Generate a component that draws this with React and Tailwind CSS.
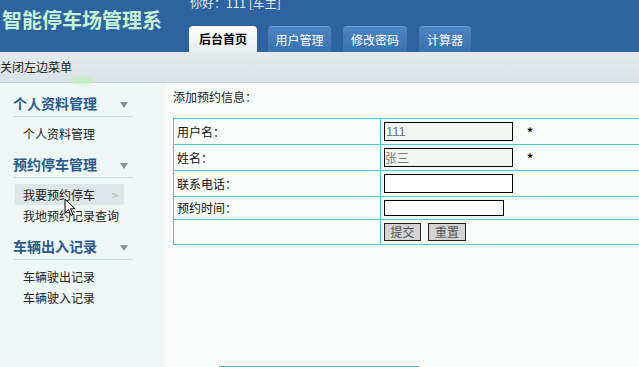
import React from "react";

const F = { fontFamily: '"Noto Sans CJK SC", "Noto Sans", sans-serif' };
const S = { fontFamily: '"Liberation Sans", "Noto Sans CJK SC", sans-serif' };

function Tri() {
  return (
    <svg width="8" height="6" viewBox="0 0 8 6" className="block">
      <path d="M0 0 L8 0 L4 6 Z" fill="#8b9096" />
    </svg>
  );
}

function Group({ title, items, active }) {
  return (
    <div className="pb-[6px]">
      <div className="ml-[13px] w-[120px] h-[28px] flex items-center justify-between pr-[5px] border-b border-[#cfdadd]">
        <span className="text-[14px] font-bold text-[#2a5a8c] leading-[16px] whitespace-nowrap">{title}</span>
        <span className="mt-[4px]"><Tri /></span>
      </div>
      <div className="pt-[6px]">
        {items.map((it) => (
          <div
            key={it}
            className={
              "ml-[15px] w-[109px] h-[21px] flex items-center justify-between pl-[8px] pr-[6px] rounded-[2px] text-[12px] text-[#222] whitespace-nowrap " +
              (it === active ? "bg-[#dde5e8]" : "")
            }
          >
            <span className="leading-[14px]">{it}</span>
            {it === active && <span className="text-[#b3bcc0] text-[11px] leading-[12px]">&gt;</span>}
          </div>
        ))}
      </div>
    </div>
  );
}

function Row({ label, children, h }) {
  return (
    <tr className={h}>
      <td className="border border-[#48cbd8] pl-[3px] text-[12px] text-[#111] w-[207px] align-middle whitespace-nowrap">{label}</td>
      <td className="border border-[#48cbd8] pl-[3px] align-middle">{children}</td>
    </tr>
  );
}

export default function App() {
  return (
    <div className="w-[639px] h-[367px] overflow-hidden relative bg-[#f6fbf9]" style={F}>
      {/* header */}
      <div className="h-[52px] bg-[#2f63a0] flex">
        <div className="w-[188px] shrink-0 pl-[2px] pt-[8px] text-[20px] leading-[24px] font-bold text-[#c6f3d6] whitespace-nowrap">
          智能停车场管理系
        </div>
        <div className="flex flex-col">
          <div className="mt-[-4px] pl-[2px] text-[12px] leading-[14px] text-[#e4ecf4] whitespace-nowrap">
            你好：111 [车主]
          </div>
          <div className="mt-auto flex items-end">
            <div className="ml-[1px] w-[68px] h-[26px] rounded-t-[4px] bg-gradient-to-b from-[#ffffff] to-[#e6ecee] flex items-center justify-center text-[12px] font-bold text-black">
              后台首页
            </div>
            <div className="ml-[11px] w-[63px] h-[26px] rounded-t-[4px] bg-gradient-to-b from-[#4d84c2] to-[#3b70ae] border-t border-[#6a9ad0] flex items-center justify-center text-[12px] text-white">
              用户管理
            </div>
            <div className="ml-[12px] w-[64px] h-[26px] rounded-t-[4px] bg-gradient-to-b from-[#4d84c2] to-[#3b70ae] border-t border-[#6a9ad0] flex items-center justify-center text-[12px] text-white">
              修改密码
            </div>
            <div className="ml-[12px] w-[52px] h-[26px] rounded-t-[4px] bg-gradient-to-b from-[#4d84c2] to-[#3b70ae] border-t border-[#6a9ad0] flex items-center justify-center text-[12px] text-white">
              计算器
            </div>
          </div>
        </div>
      </div>

      {/* toolbar */}
      <div className="h-[31px] bg-gradient-to-b from-[#e5eaec] to-[#dbe2e5] border-b border-[#c7d0d4] flex items-center">
        <span className="text-[12px] leading-[14px] text-[#222] mt-[-1px]">关闭左边菜单</span>
      </div>

      {/* body */}
      <div className="flex h-[284px]">
        <div className="w-[165px] shrink-0 bg-[#eef6f6] pt-[6px]">
          <Group title="个人资料管理" items={["个人资料管理"]} />
          <Group title="预约停车管理" items={["我要预约停车", "我地预约记录查询"]} active="我要预约停车" />
          <Group title="车辆出入记录" items={["车辆驶出记录", "车辆驶入记录"]} />
        </div>
        <div className="flex-1 min-w-0 pt-[6px] pl-[8px]">
          <div className="text-[12px] leading-[16px] text-[#222]">添加预约信息：</div>
          <table className="mt-[13px] w-[520px] min-w-[520px] border-collapse">
            <tbody>
              <Row label="用户名：" h="h-[26px]">
                <div className="flex items-center">
                  <div className="w-[129px] h-[19px] border border-black bg-[#f3f5f3] text-[13px] leading-[17px] text-[#777] pl-[1px]" style={S}>111</div>
                  <span className="ml-[14px] text-[12px] font-bold text-black">*</span>
                </div>
              </Row>
              <Row label="姓名：" h="h-[26px]">
                <div className="flex items-center">
                  <div className="w-[129px] h-[19px] border border-black bg-[#f3f5f3] text-[12px] leading-[17px] text-[#777]">张三</div>
                  <span className="ml-[14px] text-[12px] font-bold text-black">*</span>
                </div>
              </Row>
              <Row label="联系电话：" h="h-[26px]">
                <div className="w-[129px] h-[19px] border border-black bg-white"></div>
              </Row>
              <Row label="预约时间：" h="h-[23px]">
                <div className="w-[120px] h-[16px] border border-black bg-white"></div>
              </Row>
              <Row label="" h="h-[25px]">
                <div className="flex items-center gap-[7px]">
                  <div className="w-[37px] h-[18px] border border-[#222] bg-[#d4d4d4] text-[12px] leading-[16px] text-[#555] text-center">提交</div>
                  <div className="w-[38px] h-[18px] border border-[#222] bg-[#d4d4d4] text-[12px] leading-[16px] text-[#555] text-center">重置</div>
                </div>
              </Row>
            </tbody>
          </table>
          <div className="mt-[121px] ml-[46px] w-[200px] h-[2px] bg-[#4aaee6]"></div>
        </div>
      </div>

      {/* green glow artifact */}
      <div className="absolute left-[72px] top-[77px] w-[20px] h-[7px] rounded-full bg-[#bdf0b8] blur-[1.5px] opacity-80"></div>

      {/* mouse cursor */}
      <svg className="absolute left-[64px] top-[198px]" width="12" height="19" viewBox="0 0 12 19">
        <path d="M1 1 L1 15 L4.5 11.5 L7 17.5 L9 16.5 L6.5 10.8 L11 10.8 Z" fill="#fff" stroke="#000" strokeWidth="1" strokeLinejoin="round" />
      </svg>
    </div>
  );
}
